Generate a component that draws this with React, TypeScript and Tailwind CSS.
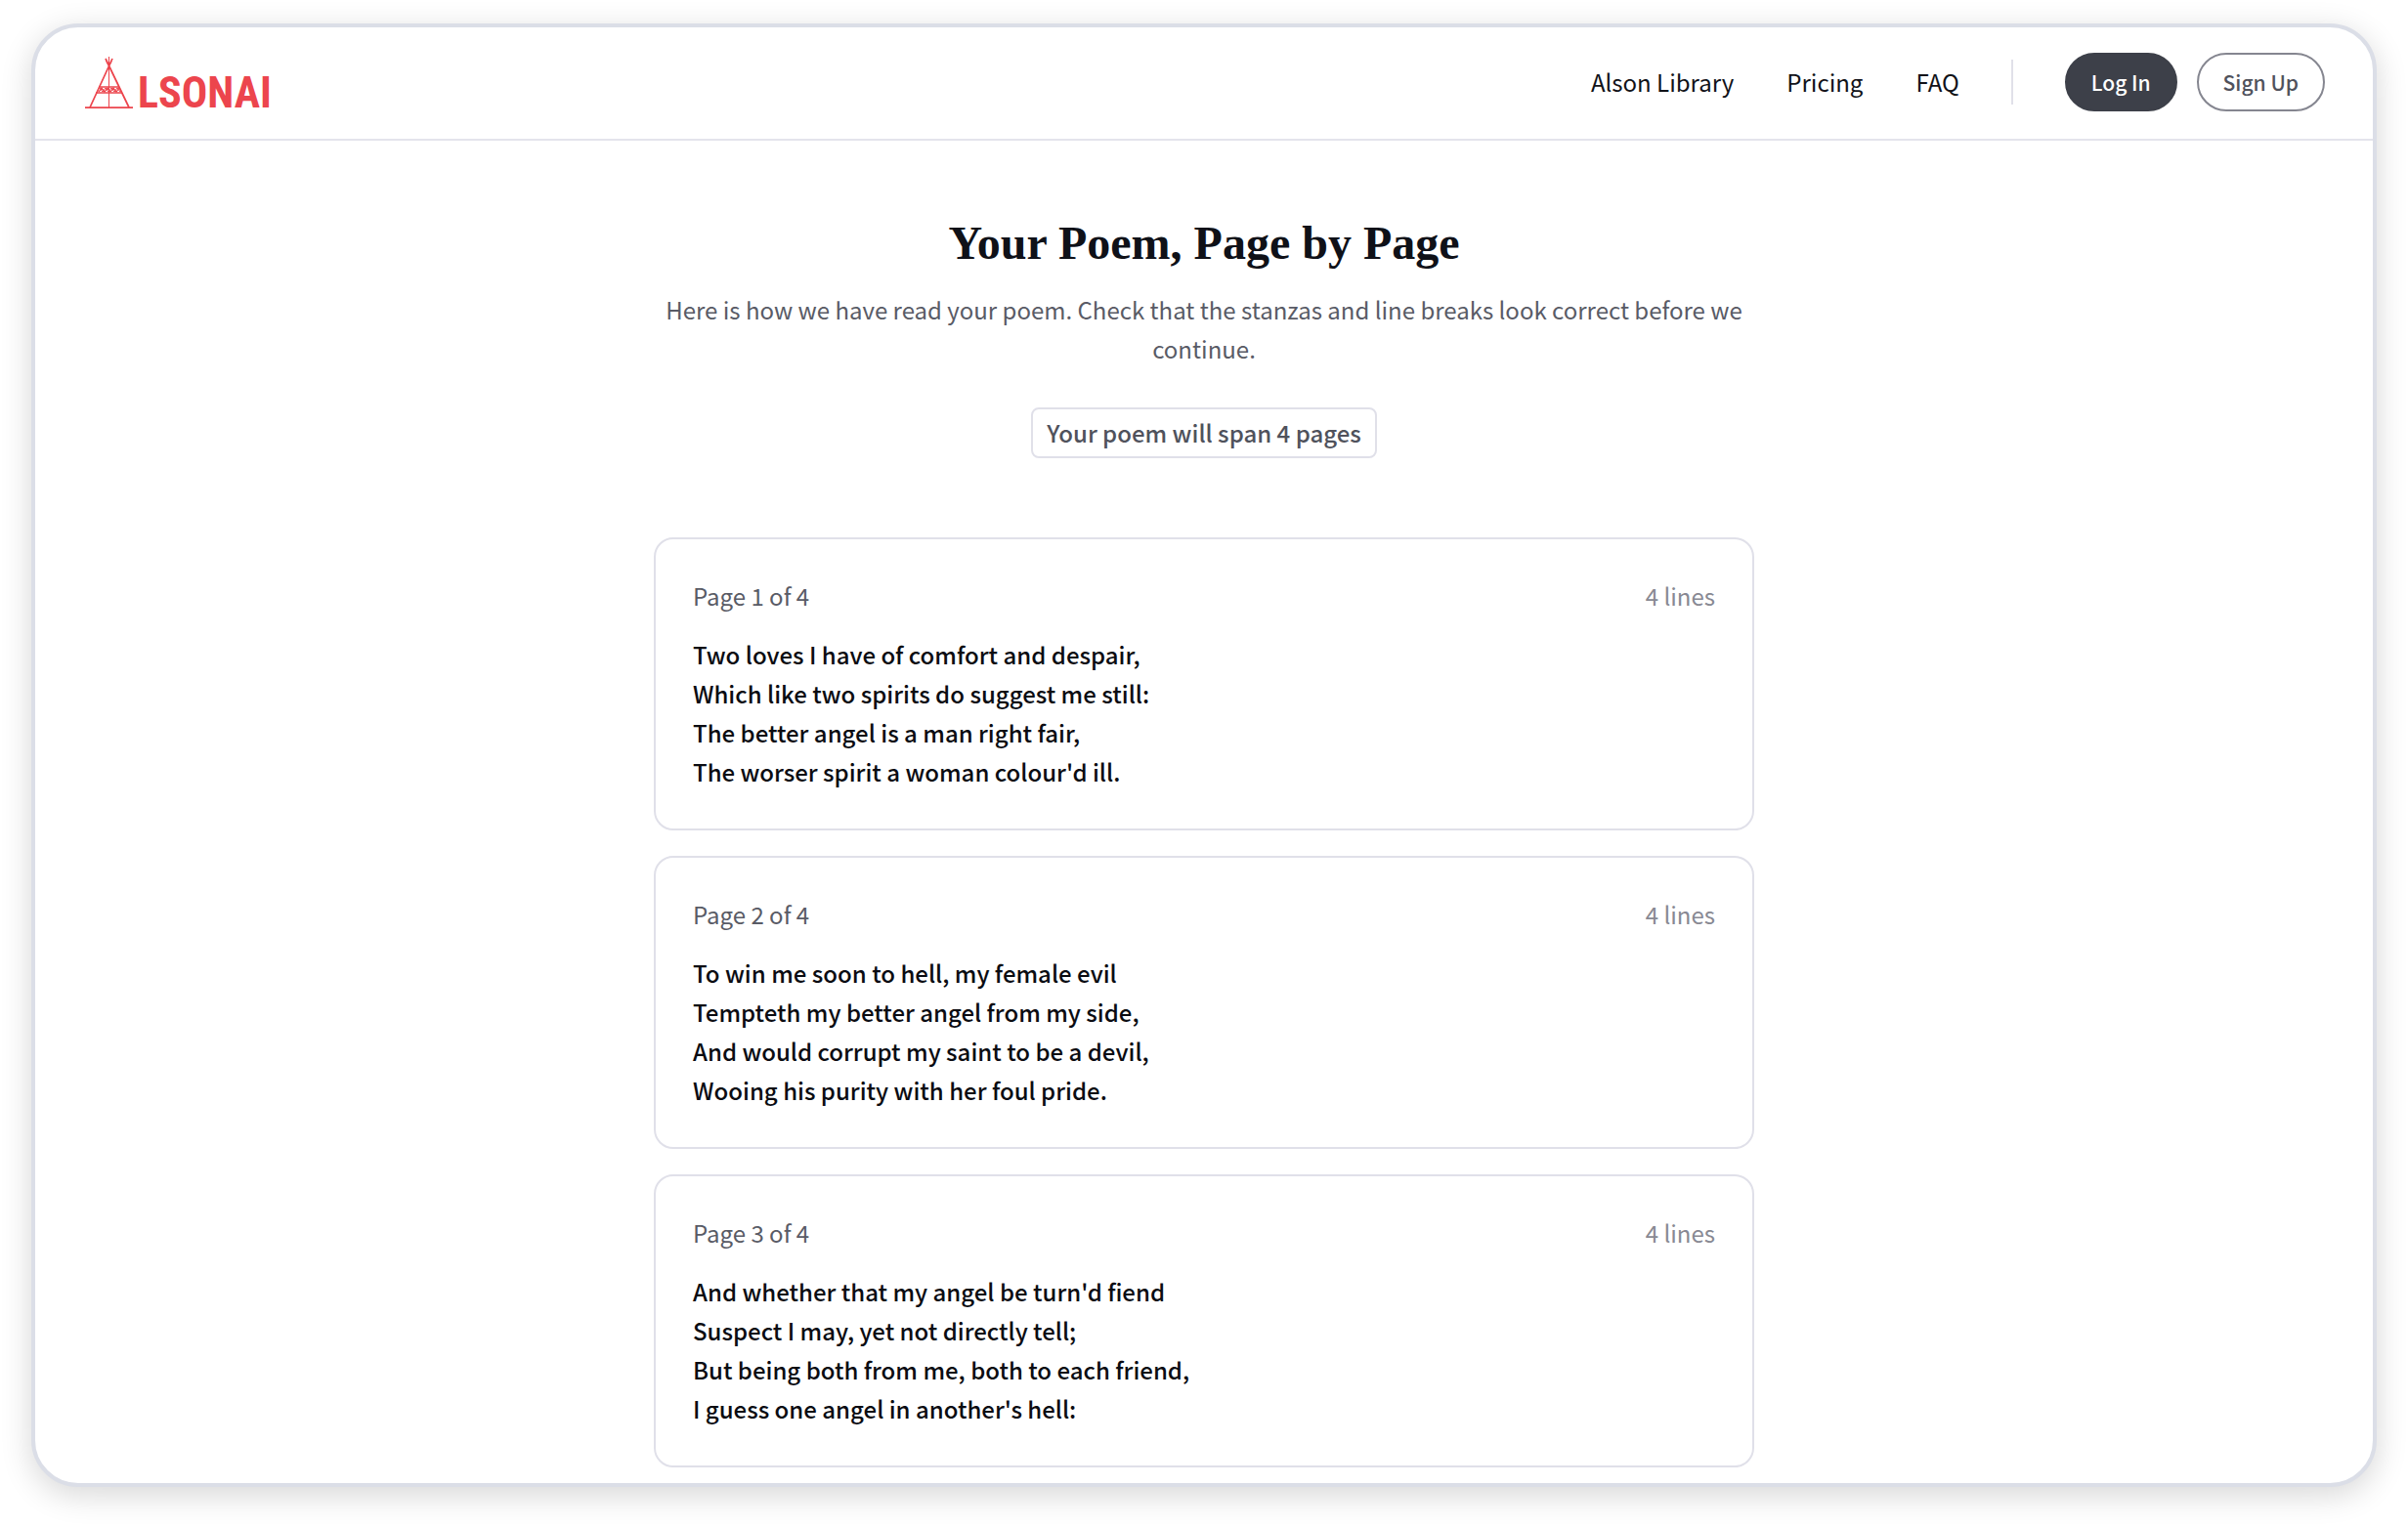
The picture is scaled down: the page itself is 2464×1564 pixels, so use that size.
const NAV_LINKS = [
  { label: "Alson Library", href: "#library" },
  { label: "Pricing", href: "#pricing" },
  { label: "FAQ", href: "#faq" },
];

const TOTAL_PAGES = 4;

const POEM_PAGES = [
  [
    "Two loves I have of comfort and despair,",
    "Which like two spirits do suggest me still:",
    "The better angel is a man right fair,",
    "The worser spirit a woman colour'd ill.",
  ],
  [
    "To win me soon to hell, my female evil",
    "Tempteth my better angel from my side,",
    "And would corrupt my saint to be a devil,",
    "Wooing his purity with her foul pride.",
  ],
  [
    "And whether that my angel be turn'd fiend",
    "Suspect I may, yet not directly tell;",
    "But being both from me, both to each friend,",
    "I guess one angel in another's hell:",
  ],
];

const TentMark = () => (
  <svg viewBox="0 0 50 54" className="h-[54px] w-[50px]" fill="none" stroke="currentColor" aria-hidden="true">
    {/* ground and poles */}
    <path d="M0 53H49" strokeWidth="1.75" />
    <path d="M5 53L28 3M45 53L21 3" strokeWidth="1.75" />
    <path d="M24.5 1V53" strokeWidth="1" />
    <path d="M22 6L24.5 10L27 6" strokeWidth="1.25" />
    {/* patterned band */}
    <path d="M14 32H35M11 38H38" strokeWidth="1.5" />
    <path d="M14 37L17 33L20 37L23 33L26 37L29 33L32 37L35 33" strokeWidth="1.25" />
    <path d="M15 33L18 37L21 33L24 37L27 33L30 37L33 33L36 37" strokeWidth="1" />
  </svg>
);

const Header = () => (
  <header className="flex items-center justify-between border-b-2 border-[#e4e4ec] pt-[26px] pr-[49px] pb-[28px] pl-[51px]">
    <a href="#home" className="flex items-end gap-1 text-[#ec454d]">
      <TentMark />
      <span className="font-['Roboto_Condensed','Noto_Sans_CJK_SC',sans-serif] text-[44px] leading-8 font-bold">
        LSONAI
      </span>
    </a>

    <div className="flex items-center">
      <nav className="flex items-center gap-[54px] text-2xl leading-10 text-[#111218]">
        {NAV_LINKS.map((link) => (
          <a key={link.label} href={link.href}>
            {link.label}
          </a>
        ))}
      </nav>
      <div className="mx-[53px] h-[46px] w-0.5 bg-[#e0e0e9]" />
      <div className="flex items-center gap-5 text-[21px] leading-8 font-medium">
        <button
          type="button"
          className="rounded-full border-2 border-[#3d4049] bg-[#3d4049] px-[25px] py-3 text-white"
        >
          Log In
        </button>
        <button
          type="button"
          className="rounded-full border-2 border-[#858690] bg-white px-[25px] py-3 text-[#50525c]"
        >
          Sign Up
        </button>
      </div>
    </div>
  </header>
);

const PoemPage = ({ number, lines }: { number: number; lines: string[] }) => (
  <article className="rounded-[20px] border-2 border-[#e0e0e9] p-[38px]">
    <div className="mb-5 flex items-center justify-between">
      <h2 className="text-[#595b66]">
        Page {number} of {TOTAL_PAGES}
      </h2>
      <span className="text-[#888993]">{lines.length} lines</span>
    </div>
    <div className="font-medium text-[#0b0c12]">
      {lines.map((line) => (
        <p key={line}>{line}</p>
      ))}
    </div>
  </article>
);

const App = () => (
  <div className="min-h-screen bg-white px-8 pt-6 pb-10 font-['Noto_Sans_CJK_SC',sans-serif]">
    <div className="overflow-hidden rounded-[48px] border-4 border-[#dbdee7] bg-white shadow-[0_8px_32px_rgba(0,0,0,0.16)]">
      <Header />
      <main className="mx-auto max-w-[1126px] pt-[75px] pb-4 text-2xl leading-10">
        <div className="flex flex-col items-center text-center">
          <h1 className="font-['Liberation_Serif',serif] text-[48px] leading-[60px] font-bold text-[#0f1118]">
            Your Poem, Page by Page
          </h1>
          <p className="mt-[18px] text-[#595b66]">
            Here is how we have read your poem. Check that the stanzas and line breaks look correct
            before we continue.
          </p>
          <p className="mt-10 rounded-lg border-2 border-[#e0e0e9] px-3.5 py-1 font-medium text-[#50525c]">
            Your poem will span {TOTAL_PAGES} pages
          </p>
        </div>

        <div className="mt-[81px] flex flex-col gap-[26px]">
          {POEM_PAGES.map((lines, i) => (
            <PoemPage key={i} number={i + 1} lines={lines} />
          ))}
        </div>
      </main>
    </div>
  </div>
);

export default App;
